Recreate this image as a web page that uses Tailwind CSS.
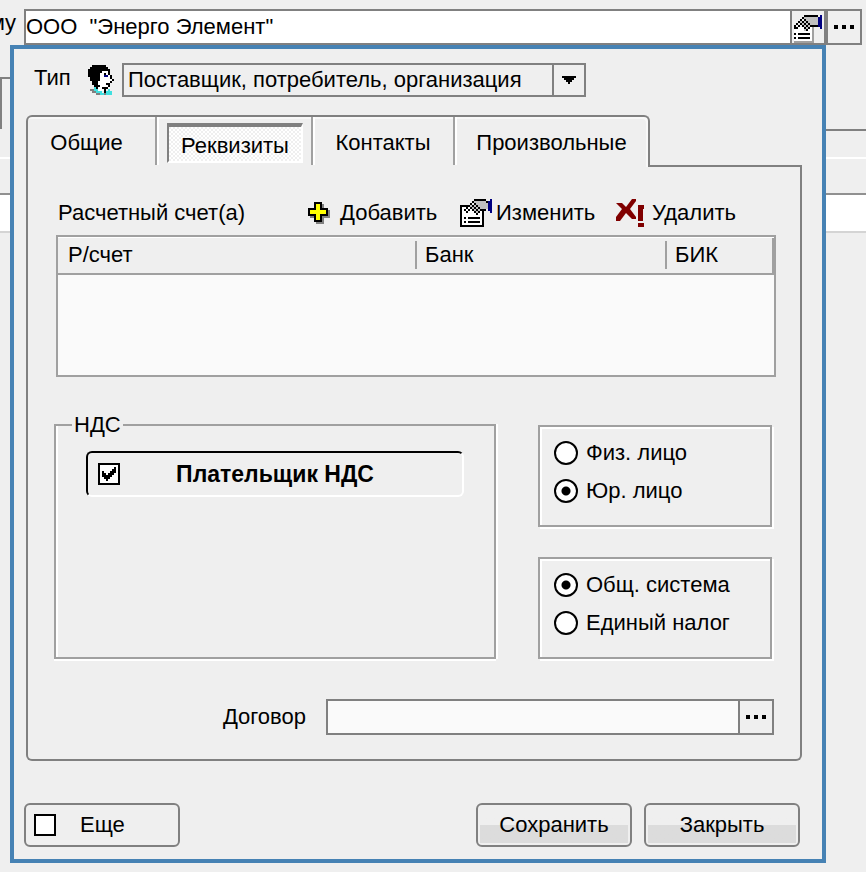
<!DOCTYPE html>
<html lang="ru">
<head>
  <meta charset="UTF-8" />
  <meta name="viewport" content="width=device-width, initial-scale=1" />
  <title>ООО "Энерго Элемент"</title>
  <script src="https://cdn.jsdelivr.net/npm/@tailwindcss/browser@4"></script>
</head>
<body class="relative min-h-screen overflow-x-hidden bg-[#efefef] font-['Liberation_Sans',Arial,sans-serif] text-[22px] leading-7 text-black">

  <!-- Основная форма -->
  <div class="flex h-[45px] pt-[9px] pr-1">
    <label for="client" class="flex w-6 shrink-0 justify-end overflow-hidden pr-2">му</label>
    <input id="client" type="text" value="ООО  &quot;Энерго Элемент&quot;" class="h-9 min-w-0 flex-1 border-2 border-r-0 border-[#808080] bg-white whitespace-pre outline-none" />
    <button type="button" aria-label="Свойства" class="flex h-9 w-9 items-end justify-center border-2 border-[#808080]">
      <svg class="h-7 w-8 shrink-0" viewBox="1 0 16 14" shape-rendering="crispEdges">
        <path fill="#fff" d="M2 6h10v8H2z" />
        <path fill="#a0a0a0" d="M11 6h1v8h-1zM2 13h10v1H2z" />
        <path d="M2 9h1v1H2zM4 9h6v1H4zM2 11h1v1H2zM4 11h6v1H4z" />
        <path fill="#c0c0c0" d="M7 1h8v4h-4v1H9v2H7V5H5V3h2z" />
        <path d="M7 0h7v1H7zM6 1h1v1H6zM5 2h1v1H5zM4 3h1v1H4zM3 4h1v1H3zM2 5h1v2H2zM3 6h1v1H3zM4 5h1v1H4zM5 4h1v1H5zM6 3h1v1H6zM7 2h1v1H7zM6 5h1v1H6zM7 4h1v1H7zM8 3h1v1H8zM7 6h1v1H7zM8 5h1v1H8zM9 4h1v1H9zM8 7h1v1H8zM9 6h1v1H9zM10 5h4v1h-4zM14 1h1v1h-1z" />
        <path fill="#000080" d="M15 0h1v7h-1v-1h-1V1h1z" />
      </svg>
    </button>
    <button type="button" aria-label="Выбрать" class="flex h-9 w-9 items-center justify-center gap-1 border-2 border-[#808080]">
      <span class="size-1 bg-black"></span><span class="size-1 bg-black"></span><span class="size-1 bg-black"></span>
    </button>
  </div>
  <div class="flex h-28 items-start pt-8">
    <div class="h-[52px] w-4 border-t-2 border-l-2 border-[#808080]"></div>
    <div class="mt-[52px] h-0.5 flex-1 bg-[#808080]"></div>
  </div>
  <div class="h-0.5 bg-white"></div>
  <div class="mt-[34px] h-10 border-t-2 border-b-2 border-t-[#909090] border-b-[#d4d4d4] bg-white"></div>

  <!-- Окно реквизитов -->
  <form class="absolute top-[45px] right-10 left-2.5 border-4 border-[#4682b4] bg-[#efefef] pt-3.5 pr-[22px] pb-3 pl-2.5">

    <div class="flex items-center pl-2.5">
      <label for="kind" class="w-[54px] pb-1">Тип</label>
      <svg class="mr-2 h-[30px] w-[26px]" viewBox="0 0 13 15" shape-rendering="crispEdges">
        <path fill="#fff" d="M5 3h5v2h1v2h1v2h-1v3H9v1H4V8h1z" />
        <path d="M2 0h7v1h1v1h1v1H7v1H6v4H5v2h1v1H4v1H3V10H2V8H1V6H0V2h1V1h1z" />
        <path d="M10 3h1v2h-1zM11 5h1v2h-1zM12 7h1v1h-1zM11 8h1v1h-1zM9 9h2v1H9zM10 10h1v1h-1zM7 11h3v1H7zM8 4h1v1H8zM4 9h1v3H4zM8 12h1v2H8z" />
        <path fill="#000080" d="M8 5h2v1H8z" />
        <path fill="#808080" d="M1 12h2v1H1zM2 13h2v1H2zM4 14h4v1H4zM8 14h1v1H8z" />
        <path fill="#40e0e0" d="M3 11h1v1h1v1h2v1h1v1H6v-1H4v-1H3zM9 13h1v-1h1v1h1v2H9z" />
      </svg>
      <div class="relative w-[464px]">
        <select id="kind" class="block h-[34px] w-full appearance-none border-2 border-[#808080] bg-[#efefef] pr-9 pl-1 outline-none">
          <option>Поставщик, потребитель, организация</option>
        </select>
        <span class="pointer-events-none absolute inset-y-0 right-0 flex w-[34px] items-center justify-center border-2 border-[#808080]">
          <svg class="h-2 w-3.5" viewBox="0 0 7 4" shape-rendering="crispEdges"><path d="M0 0h7v1H6v1H5v1H4v1H3V3H2V2H1V1H0z" /></svg>
        </span>
      </div>
    </div>

    <!-- Вкладки -->
    <div class="mt-[18px] -mr-0.5 ml-0.5 flex">
      <div role="tablist" class="flex h-[52px] rounded-t-md border-2 border-b-0 border-[#808080] shadow-[inset_-2px_2px_0_#f8f8f8]">
        <button type="button" role="tab" class="mb-0.5 w-[129px] border-r-2 border-[#a0a0a0] pt-1 pr-2.5 shadow-[2px_0_0_#fff]">Общие</button>
        <div class="mb-0.5 w-[156px] border-r-2 border-[#a0a0a0] pt-1.5 pr-2 pb-0.5 pl-2.5 shadow-[2px_0_0_#fff]">
          <button type="button" role="tab" aria-selected="true" class="h-full w-full border-2 border-t-4 border-t-[#808080] border-r-white border-b-white border-l-[#808080] bg-[repeating-conic-gradient(#fff_0_25%,#efefef_0_50%)] bg-[length:4px_4px] pt-1">Реквизиты</button>
        </div>
        <button type="button" role="tab" class="mb-0.5 w-[142px] border-r-2 border-[#a0a0a0] pt-1 shadow-[2px_0_0_#fff]">Контакты</button>
        <button type="button" role="tab" class="mb-0.5 w-[193px] pt-1">Произвольные</button>
      </div>
      <div class="flex-1 border-b-2 border-[#808080]"></div>
    </div>

    <div role="tabpanel" class="-mr-0.5 ml-0.5 rounded-b-md border-x-2 border-b-2 border-[#808080] pt-8 pr-6 pb-6 pl-7">
      <div class="flex items-center pl-0.5">
        <span class="w-[250px]">Расчетный счет(а)</span>
        <button type="button" class="flex w-[152px] items-center gap-2.5 text-left">
          <svg class="size-[22px] shrink-0" viewBox="0 0 11 11" shape-rendering="crispEdges">
            <path fill="#808080" d="M4 1h4v3h3v4H8v3H4V8H1V4h3z" />
            <path d="M3 0h4v3h3v4H7v3H3V7H0V3h3z" />
            <path fill="#ff0" d="M4 1h2v3h3v2H6v3H4V6H1V4h3z" />
          </svg>
          Добавить
        </button>
        <button type="button" class="flex w-[156px] items-center gap-1 text-left">
          <svg class="h-7 w-8 shrink-0" viewBox="0 0 16 14" shape-rendering="crispEdges">
            <path fill="#fff" d="M0 3h12v11H0z" />
            <path d="M0 3h4v1H1v9h10V6h1v8H0zM2 9h1v1H2zM4 9h6v1H4zM2 11h1v1H2zM4 11h6v1H4z" />
            <path fill="#c0c0c0" d="M7 1h8v4h-5v1H9v1H7V5H5V3h2z" />
            <path d="M7 0h6v1H7zM6 1h1v1H6zM5 2h1v1H5zM4 3h1v1H4zM3 4h1v1H3zM2 5h1v1H2zM3 6h1v1H3zM4 5h1v1H4zM5 4h1v1H5zM6 3h1v1H6zM7 2h1v1H7zM6 5h1v1H6zM7 4h1v1H7zM8 3h1v1H8zM7 6h1v1H7zM8 5h1v1H8zM9 4h1v1H9zM8 7h1v1H8zM9 6h1v1H9zM10 5h3v1h-3zM13 1h1v1h-1z" />
            <path fill="#000080" d="M15 0h1v7h-1v-1h-1V1h1z" />
          </svg>
          Изменить
        </button>
        <button type="button" class="flex items-center gap-2 text-left">
          <svg class="size-7 shrink-0" viewBox="0 0 14 14" fill="#800000">
            <path d="M0 2h3l2 2 3-4h2v1L7 5l3 4v1H8L5 7l-3 4H0V9l3-4z" />
            <path d="M11 3h3v2h-.5v6H11zM11 12h3v2h-3z" />
          </svg>
          Удалить
        </button>
      </div>

      <table class="mt-2 w-full table-fixed border-2 border-[#a0a0a0] bg-[#fafafa] text-left">
        <colgroup>
          <col class="w-1/2" />
          <col class="w-[250px]" />
          <col class="w-[110px]" />
        </colgroup>
        <thead class="bg-[#efefef]">
          <tr class="h-[38px] border-b-2 border-[#a0a0a0] shadow-[inset_0_2px_0_#fff,inset_-3px_0_0_#a0a0a0]">
            <th scope="col" class="p-0 pl-2.5 font-normal">Р/счет</th>
            <th scope="col" class="p-0 font-normal"><div class="border-l-2 border-[#a0a0a0] pl-2">Банк</div></th>
            <th scope="col" class="p-0 font-normal"><div class="border-l-2 border-[#a0a0a0] pl-2">БИК</div></th>
          </tr>
        </thead>
        <tbody>
          <tr class="h-[102px]"><td></td><td></td><td></td></tr>
        </tbody>
      </table>

      <div class="mt-[34px] -ml-0.5 flex items-stretch justify-between">
        <fieldset class="w-[442px] border-2 border-[#a0a0a0] px-[30px] pb-3 shadow-[2px_0_0_#fff,0_2px_0_#fff,inset_2px_0_0_#fff]">
          <legend class="-ml-3.5 px-0.5">НДС</legend>
          <label class="mt-3 flex h-[46px] items-center rounded-md border-2 border-t-black border-r-white border-b-white border-l-black pl-2.5">
            <input type="checkbox" checked class="size-[22px] appearance-none border-2 border-black bg-white" />
            <svg class="pointer-events-none relative -ml-[18px] h-3.5 w-3.5" viewBox="0 0 7 7" shape-rendering="crispEdges"><path d="M0 2h1v1h1v1h1V3h1V2h1V1h1V0h1v3H6v1H5v1H4v1H3v1H2V6H1V5H0z" /></svg>
            <b class="flex-1 pr-7 text-center text-[23px]">Плательщик НДС</b>
          </label>
        </fieldset>
        <div class="mt-3.5 mr-1 flex w-[234px] flex-col gap-[30px]">
          <div role="radiogroup" class="flex h-[102px] flex-col gap-2.5 border-2 border-[#a0a0a0] px-3.5 pt-3 shadow-[2px_2px_0_#fff,inset_2px_2px_0_#fff]">
            <label class="flex items-center gap-2"><input type="radio" name="person" class="size-6 appearance-none rounded-full border-2 border-black bg-white checked:bg-[radial-gradient(circle,#000_4px,#fff_5px)]" />Физ. лицо</label>
            <label class="flex items-center gap-2"><input type="radio" name="person" checked class="size-6 appearance-none rounded-full border-2 border-black bg-white checked:bg-[radial-gradient(circle,#000_4px,#fff_5px)]" />Юр. лицо</label>
          </div>
          <div role="radiogroup" class="flex h-[102px] flex-col gap-2.5 border-2 border-[#a0a0a0] px-3.5 pt-3 shadow-[2px_2px_0_#fff,inset_2px_2px_0_#fff]">
            <label class="flex items-center gap-2"><input type="radio" name="tax" checked class="size-6 appearance-none rounded-full border-2 border-black bg-white checked:bg-[radial-gradient(circle,#000_4px,#fff_5px)]" />Общ. система</label>
            <label class="flex items-center gap-2"><input type="radio" name="tax" class="size-6 appearance-none rounded-full border-2 border-black bg-white checked:bg-[radial-gradient(circle,#000_4px,#fff_5px)]" />Единый налог</label>
          </div>
        </div>
      </div>

      <div class="mt-10 mr-0.5 flex items-center">
        <label for="contract" class="w-[270px] pr-5 text-right">Договор</label>
        <input id="contract" type="text" class="h-9 min-w-0 flex-1 border-2 border-r-0 border-[#808080] bg-[#fafafa] outline-none" />
        <button type="button" aria-label="Выбрать договор" class="flex h-9 w-9 items-center justify-center gap-1 border-2 border-[#808080]">
          <span class="size-1 bg-black"></span><span class="size-1 bg-black"></span><span class="size-1 bg-black"></span>
        </button>
      </div>
    </div>

    <!-- Кнопки -->
    <div class="mt-[42px] flex gap-3">
      <label class="mr-auto flex h-11 w-[156px] items-center gap-6 rounded-md border-2 border-[#808080] pl-2">
        <input type="checkbox" class="size-[22px] appearance-none border-2 border-black bg-white" />
        Еще
      </label>
      <button type="submit" class="h-11 w-[156px] rounded-md border-2 border-[#808080] p-0.5"><span class="flex h-full items-center justify-center bg-linear-to-b from-[#efefef] from-50% to-[#dcdcdc] to-50%">Сохранить</span></button>
      <button type="button" class="h-11 w-[156px] rounded-md border-2 border-[#808080] p-0.5"><span class="flex h-full items-center justify-center bg-linear-to-b from-[#efefef] from-50% to-[#dcdcdc] to-50%">Закрыть</span></button>
    </div>
  </form>

</body>
</html>
